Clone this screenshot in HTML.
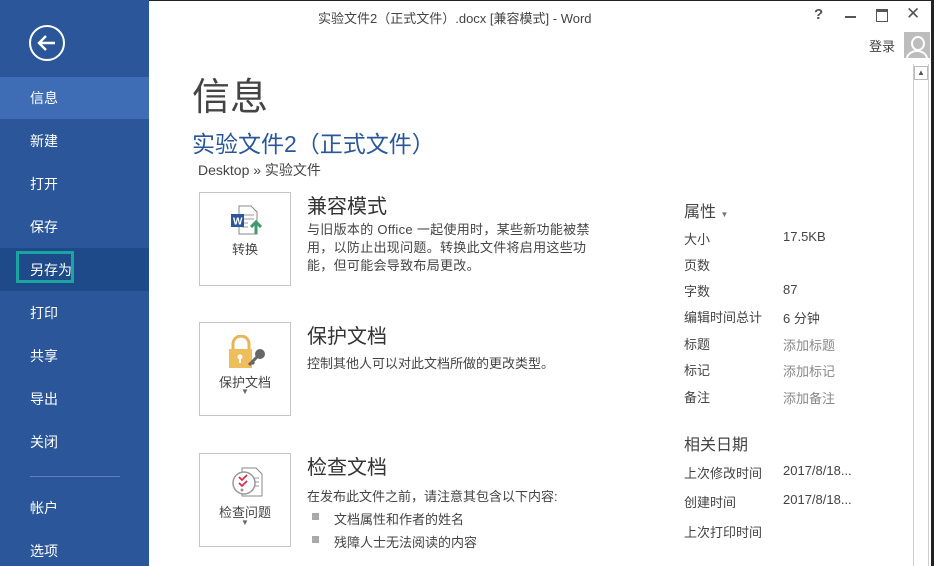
<!DOCTYPE html>
<html><head><meta charset="utf-8"><style>
body{margin:0;width:934px;height:566px;overflow:hidden;background:#fff;position:relative;font-family:"Liberation Sans","Noto Sans CJK SC",sans-serif;color:#444}
.a{position:absolute;white-space:nowrap}
#side{position:absolute;left:0;top:0;width:149px;height:566px;background:#2b579a}
.nav{position:absolute;left:30px;color:#fff;font-size:14px}
.box{position:absolute;left:199px;width:90px;height:92px;border:1px solid #c6c6c6;background:#fff}
.bl{position:absolute;width:100%;text-align:center;font-size:13px;color:#444}
h2{margin:0;font-weight:normal}
.k{font-size:13px;color:#444}
.g{font-size:13px;color:#888}
</style></head><body>
<div style="position:absolute;left:0;top:0;width:934px;height:1px;background:#222"></div>
<div id="side">
 <svg class="a" style="left:28px;top:24px" width="38" height="38" viewBox="0 0 38 38"><circle cx="19" cy="19" r="17" fill="none" stroke="#fff" stroke-width="2"/><path d="M27 19H11M18 12l-7 7 7 7" fill="none" stroke="#fff" stroke-width="2.4"/></svg>
 <div class="a" style="left:0;top:77px;width:149px;height:42px;background:#3e6db5"></div>
 <div class="a" style="left:0;top:248px;width:149px;height:43px;background:#1f4a8a"></div>
 <div class="a" style="left:16px;top:251px;width:58px;height:32px;border:3px solid #1ba5a0;box-sizing:border-box"></div>
 <div class="nav a" style="top:88px">信息</div>
 <div class="nav a" style="top:131px">新建</div>
 <div class="nav a" style="top:174px">打开</div>
 <div class="nav a" style="top:217px">保存</div>
 <div class="nav a" style="top:260px">另存为</div>
 <div class="nav a" style="top:303px">打印</div>
 <div class="nav a" style="top:346px">共享</div>
 <div class="nav a" style="top:389px">导出</div>
 <div class="nav a" style="top:432px">关闭</div>
 <div class="a" style="left:30px;top:476px;width:90px;height:1px;background:#5a7fbb"></div>
 <div class="nav a" style="top:498px">帐户</div>
 <div class="nav a" style="top:541px">选项</div>
</div>
<div class="a" style="left:318px;top:8px;font-size:13px;color:#444">实验文件2（正式文件）.docx [兼容模式] - Word</div>
<div class="a" style="left:814px;top:6px;font-size:15px;font-weight:bold;color:#555">?</div>
<div class="a" style="left:845px;top:16px;width:11px;height:2px;background:#555"></div>
<div class="a" style="left:876px;top:9px;width:10px;height:9px;border:1px solid #555;border-top-width:3px"></div>
<div class="a" style="left:906px;top:4px;font-size:17px;color:#555">✕</div>
<div class="a" style="left:869px;top:36px;font-size:13px;color:#444">登录</div>
<div class="a" style="left:904px;top:32px;width:26px;height:26px;background:#bdbdbd;overflow:hidden"><div class="a" style="left:7px;top:4px;width:10px;height:11px;border:2px solid #fff;border-radius:50%"></div><div class="a" style="left:2px;top:18px;width:18px;height:14px;border:2px solid #fff;border-radius:50% 50% 0 0"></div></div>
<div class="a" style="left:913px;top:64px;width:16px;height:502px;border-left:1px solid #ccc;border-right:1px solid #ccc;box-sizing:border-box"></div>
<div class="a" style="left:914px;top:66px;width:14px;height:14px;border:1px solid #bbb;box-sizing:border-box;font-size:8px;text-align:center;line-height:12px;color:#555">▲</div>
<div class="a" style="left:931px;top:0;width:3px;height:566px;background:#222"></div>

<h2 class="a" style="left:192px;top:66px;font-size:38px;color:#444">信息</h2>
<div class="a" style="left:192px;top:125px;font-size:23px;color:#2b579a">实验文件2（正式文件）</div>
<div class="a" style="left:198px;top:160px;font-size:14px;color:#444">Desktop » 实验文件</div>

<div class="box" style="top:192px">
 <svg class="a" style="left:30px;top:12px" width="34" height="30" viewBox="0 0 34 30"><path d="M9 1h12l6 6v22H9z" fill="#fff" stroke="#888"/><path d="M12 10h12M12 14h12M12 18h6M12 22h6" stroke="#999"/><rect x="1" y="9" width="13" height="13" fill="#2b579a"/><text x="3" y="19.5" font-size="10" font-weight="bold" fill="#fff" font-family="Liberation Sans">W</text><path d="M26 29V18M21 22l5-5 5 5" stroke="#3f9a6e" stroke-width="3" fill="none"/></svg>
 <div class="bl" style="top:46px">转换</div>
</div>
<h2 class="a" style="left:307px;top:190px;font-size:20px;color:#333">兼容模式</h2>
<div class="a k" style="left:307px;top:221px;line-height:18px;letter-spacing:0.3px">与旧版本的 Office 一起使用时，某些新功能被禁<br>用，以防止出现问题。转换此文件将启用这些功<br>能，但可能会导致布局更改。</div>

<div class="box" style="top:322px">
 <svg class="a" style="left:27px;top:12px" width="40" height="34" viewBox="0 0 40 34"><path d="M6 14V9a8 8 0 0 1 16 0v5" fill="none" stroke="#e7b555" stroke-width="3"/><rect x="2" y="14" width="23" height="19" fill="#efbe5c"/><circle cx="13" cy="22" r="2.5" fill="#fff"/><rect x="12" y="23" width="2" height="5" fill="#fff"/><circle cx="33" cy="19" r="5" fill="#666"/><path d="M30 22l-8 8M25 27l2 2" stroke="#666" stroke-width="3"/></svg>
 <div class="bl" style="top:49px">保护文档</div>
 <div class="bl" style="top:64px;font-size:8px;color:#666">▼</div>
</div>
<h2 class="a" style="left:307px;top:320px;font-size:20px;color:#333">保护文档</h2>
<div class="a k" style="left:307px;top:353px">控制其他人可以对此文档所做的更改类型。</div>

<div class="box" style="top:453px">
 <svg class="a" style="left:30px;top:12px" width="34" height="34" viewBox="0 0 34 34"><path d="M12 2h14l6 6v22H12z" fill="#fff" stroke="#888"/><path d="M24 12h5M24 16h5M24 20h5" stroke="#999"/><circle cx="14" cy="17" r="11" fill="#fff" stroke="#999" stroke-width="1.5"/><path d="M9 11l3 3 5-5M9 17l3 3 5-5" stroke="#d24" stroke-width="1.6" fill="none"/><circle cx="12" cy="24" r="1.5" fill="#999"/></svg>
 <div class="bl" style="top:48px">检查问题</div>
 <div class="bl" style="top:64px;font-size:8px;color:#666">▼</div>
</div>
<h2 class="a" style="left:307px;top:451px;font-size:20px;color:#333">检查文档</h2>
<div class="a k" style="left:307px;top:486px">在发布此文件之前，请注意其包含以下内容:</div>
<div class="a" style="left:312px;top:513px;width:7px;height:7px;background:#aaa"></div>
<div class="a k" style="left:334px;top:509px">文档属性和作者的姓名</div>
<div class="a" style="left:312px;top:536px;width:7px;height:7px;background:#aaa"></div>
<div class="a k" style="left:334px;top:532px">残障人士无法阅读的内容</div>

<div class="a" style="left:684px;top:198px;font-size:16px;color:#444">属性 <span style="font-size:8px;color:#777">▼</span></div>
<div class="a k" style="left:684px;top:229px">大小</div><div class="a k" style="left:783px;top:229px">17.5KB</div>
<div class="a k" style="left:684px;top:255px">页数</div>
<div class="a k" style="left:684px;top:281px">字数</div><div class="a k" style="left:783px;top:282px">87</div>
<div class="a k" style="left:684px;top:307px">编辑时间总计</div><div class="a k" style="left:783px;top:308px">6 分钟</div>
<div class="a k" style="left:684px;top:334px">标题</div><div class="a g" style="left:783px;top:335px">添加标题</div>
<div class="a k" style="left:684px;top:360px">标记</div><div class="a g" style="left:783px;top:361px">添加标记</div>
<div class="a k" style="left:684px;top:387px">备注</div><div class="a g" style="left:783px;top:388px">添加备注</div>
<div class="a" style="left:684px;top:431px;font-size:16px;color:#444">相关日期</div>
<div class="a k" style="left:684px;top:463px">上次修改时间</div><div class="a k" style="left:783px;top:463px">2017/8/18...</div>
<div class="a k" style="left:684px;top:492px">创建时间</div><div class="a k" style="left:783px;top:492px">2017/8/18...</div>
<div class="a k" style="left:684px;top:522px">上次打印时间</div>
</body></html>
